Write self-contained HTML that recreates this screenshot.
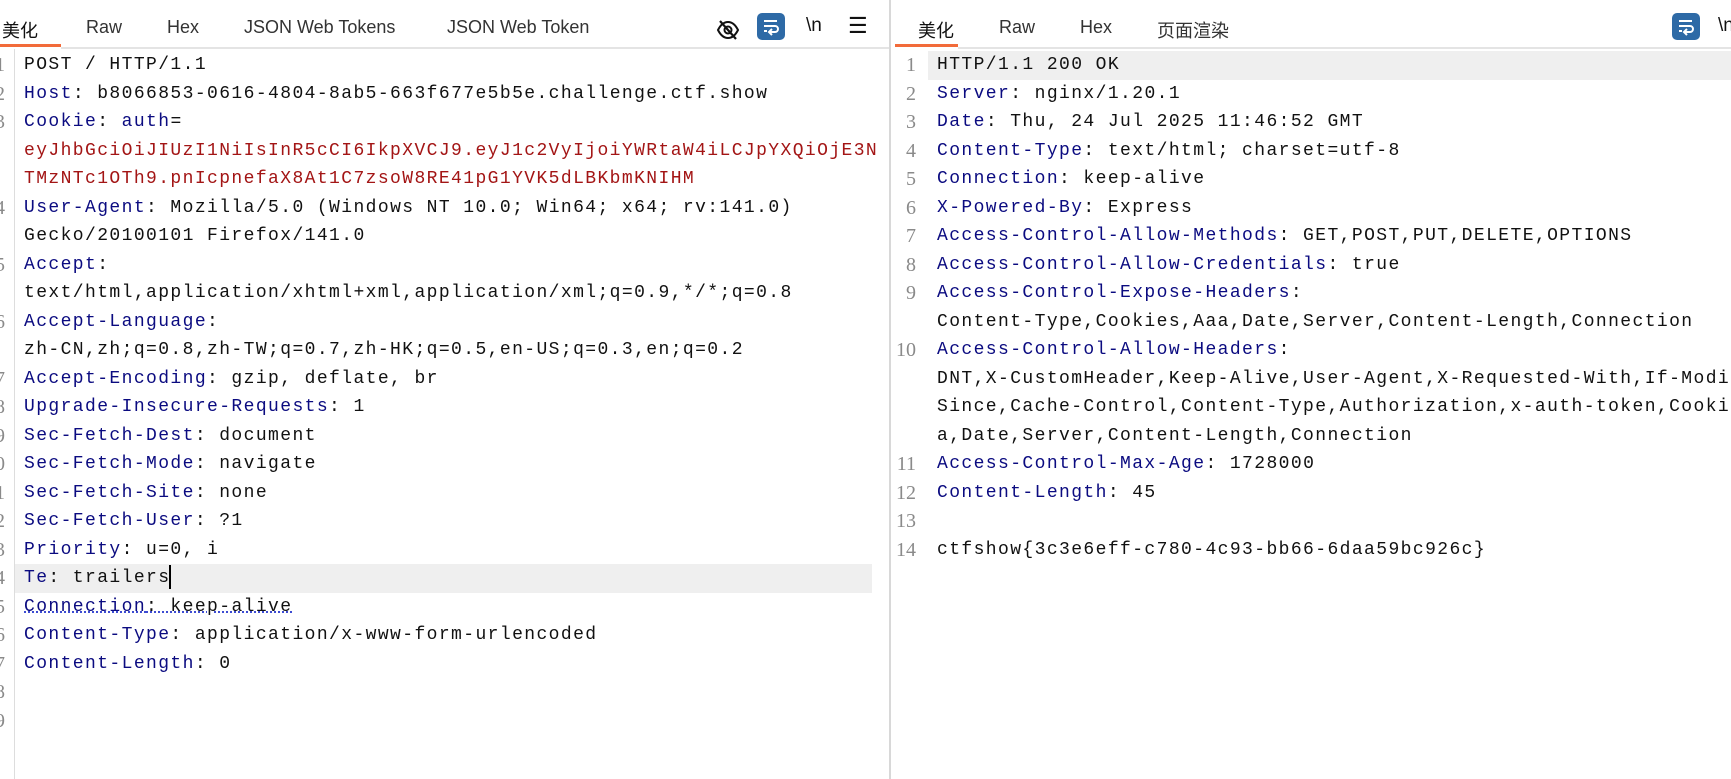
<!DOCTYPE html>
<html><head><meta charset="utf-8"><style>
*{margin:0;padding:0;box-sizing:border-box}
body{width:1731px;height:779px;overflow:hidden;background:#fff;position:relative;font-family:"Liberation Sans","Noto Sans CJK SC",sans-serif}
.tab{position:absolute;top:17px;font-size:18px;color:#333;white-space:nowrap}
.ul{position:absolute;top:44px;height:3px;background:#f26b3a}
.hr{position:absolute;top:47px;height:2px;background:#e4e4e4}
.code{position:absolute;font-family:"Liberation Mono",monospace;font-size:18px;letter-spacing:1.4px;color:#111;white-space:pre}
.r{position:absolute;height:28.5px;line-height:28.5px;white-space:pre}
.k{color:#0b0b80}
.v{color:#a31515}
.n{position:absolute;width:30px;text-align:right;color:#8a8a8a;font-family:"Liberation Serif",serif;font-size:20px;line-height:28.5px}
.hl{position:absolute;height:28.5px;background:#efefef}
</style></head><body>
<!-- left tabs -->
<div class="tab" style="left:2px;color:#111">美化</div>
<div class="tab" style="left:86px">Raw</div>
<div class="tab" style="left:167px">Hex</div>
<div class="tab" style="left:244px">JSON Web Tokens</div>
<div class="tab" style="left:447px">JSON Web Token</div>
<div class="ul" style="left:0;width:61px"></div>
<div class="hr" style="left:61px;width:828px"></div>
<svg style="position:absolute;left:716px;top:19px" width="24" height="22" viewBox="0 0 24 22"><path d="M2 11C5 5 9 3 12 3s7 2 10 8c-3 6-7 8-10 8S5 17 2 11z" fill="none" stroke="#111" stroke-width="2"/><circle cx="12" cy="11" r="3.5" fill="none" stroke="#111" stroke-width="2"/><path d="M4 2L20 20" stroke="#111" stroke-width="2.2"/></svg>
<div style="position:absolute;left:757px;top:13px;width:28px;height:27px;border-radius:5px;background:#2e6aa6"></div>
<svg style="position:absolute;left:760px;top:16px" width="22" height="21" viewBox="0 0 22 21"><path d="M4 5h13M4 10h11a3 3 0 010 6h-5M4 15h3" fill="none" stroke="#fff" stroke-width="2"/><path d="M12 13l-3 3 3 3" fill="none" stroke="#fff" stroke-width="2"/></svg>
<div class="tab" style="left:806px;top:15px;font-size:19px;color:#111">\n</div>
<div class="tab" style="left:848px;top:13px;font-size:22px;color:#111">☰</div>
<!-- divider -->
<div style="position:absolute;left:889px;top:0;width:2px;height:779px;background:#d8d8d8"></div>
<!-- right tabs -->
<div class="tab" style="left:918px;color:#111">美化</div>
<div class="tab" style="left:999px">Raw</div>
<div class="tab" style="left:1080px">Hex</div>
<div class="tab" style="left:1157px">页面渲染</div>
<div class="ul" style="left:895px;width:63px"></div>
<div class="hr" style="left:958px;width:773px"></div>
<div style="position:absolute;left:1672px;top:13px;width:28px;height:27px;border-radius:5px;background:#2e6aa6"></div>
<svg style="position:absolute;left:1675px;top:16px" width="22" height="21" viewBox="0 0 22 21"><path d="M4 5h13M4 10h11a3 3 0 010 6h-5M4 15h3" fill="none" stroke="#fff" stroke-width="2"/><path d="M12 13l-3 3 3 3" fill="none" stroke="#fff" stroke-width="2"/></svg>
<div class="tab" style="left:1718px;top:15px;font-size:19px;color:#111">\n</div>

<!-- left editor -->
<div style="position:absolute;left:14px;top:49px;width:1px;height:730px;background:#ddd"></div>
<div class="hl" style="left:15px;width:857px;top:564px"></div>
<div class="n" style="left:-25px;top:51px">1</div><div class="n" style="left:-25px;top:79.5px">2</div><div class="n" style="left:-25px;top:108px">3</div><div class="n" style="left:-25px;top:193.5px">4</div><div class="n" style="left:-25px;top:250.5px">5</div><div class="n" style="left:-25px;top:307.5px">6</div><div class="n" style="left:-25px;top:364.5px">7</div><div class="n" style="left:-25px;top:393px">8</div><div class="n" style="left:-25px;top:421.5px">9</div><div class="n" style="left:-25px;top:450px">0</div><div class="n" style="left:-25px;top:478.5px">1</div><div class="n" style="left:-25px;top:507px">2</div><div class="n" style="left:-25px;top:535.5px">3</div><div class="n" style="left:-25px;top:564px">4</div><div class="n" style="left:-25px;top:592.5px">5</div><div class="n" style="left:-25px;top:621px">6</div><div class="n" style="left:-25px;top:649.5px">7</div><div class="n" style="left:-25px;top:678px">8</div><div class="n" style="left:-25px;top:706.5px">9</div>
<div class="code" style="left:24px;top:51px">
<div class="r" style="top:0">POST / HTTP/1.1</div>
<div class="r" style="top:28.5px"><span class="k">Host</span>: b8066853-0616-4804-8ab5-663f677e5b5e.challenge.ctf.show</div>
<div class="r" style="top:57px"><span class="k">Cookie</span>: <span class="k">auth</span>=</div>
<div class="r v" style="top:85.5px">eyJhbGciOiJIUzI1NiIsInR5cCI6IkpXVCJ9.eyJ1c2VyIjoiYWRtaW4iLCJpYXQiOjE3N</div>
<div class="r v" style="top:114px">TMzNTc1OTh9.pnIcpnefaX8At1C7zsoW8RE41pG1YVK5dLBKbmKNIHM</div>
<div class="r" style="top:142.5px"><span class="k">User-Agent</span>: Mozilla/5.0 (Windows NT 10.0; Win64; x64; rv:141.0)</div>
<div class="r" style="top:171px">Gecko/20100101 Firefox/141.0</div>
<div class="r" style="top:199.5px"><span class="k">Accept</span>:</div>
<div class="r" style="top:228px">text/html,application/xhtml+xml,application/xml;q=0.9,*/*;q=0.8</div>
<div class="r" style="top:256.5px"><span class="k">Accept-Language</span>:</div>
<div class="r" style="top:285px">zh-CN,zh;q=0.8,zh-TW;q=0.7,zh-HK;q=0.5,en-US;q=0.3,en;q=0.2</div>
<div class="r" style="top:313.5px"><span class="k">Accept-Encoding</span>: gzip, deflate, br</div>
<div class="r" style="top:342px"><span class="k">Upgrade-Insecure-Requests</span>: 1</div>
<div class="r" style="top:370.5px"><span class="k">Sec-Fetch-Dest</span>: document</div>
<div class="r" style="top:399px"><span class="k">Sec-Fetch-Mode</span>: navigate</div>
<div class="r" style="top:427.5px"><span class="k">Sec-Fetch-Site</span>: none</div>
<div class="r" style="top:456px"><span class="k">Sec-Fetch-User</span>: ?1</div>
<div class="r" style="top:484.5px"><span class="k">Priority</span>: u=0, i</div>
<div class="r" style="top:513px"><span class="k">Te</span>: trailers<span style="display:inline-block;width:2px;height:24px;background:#000;vertical-align:middle;margin-left:-1px"></span></div>
<div class="r" style="top:541.5px;text-decoration:underline dotted #2233cc"><span class="k">Connection</span>: keep-alive</div>
<div class="r" style="top:570px"><span class="k">Content-Type</span>: application/x-www-form-urlencoded</div>
<div class="r" style="top:598.5px"><span class="k">Content-Length</span>: 0</div>
</div>

<!-- right editor -->
<div class="hl" style="left:928px;width:803px;top:51px"></div>
<div class="n" style="left:886px;top:51px">1</div><div class="n" style="left:886px;top:79.5px">2</div><div class="n" style="left:886px;top:108px">3</div><div class="n" style="left:886px;top:136.5px">4</div><div class="n" style="left:886px;top:165px">5</div><div class="n" style="left:886px;top:193.5px">6</div><div class="n" style="left:886px;top:222px">7</div><div class="n" style="left:886px;top:250.5px">8</div><div class="n" style="left:886px;top:279px">9</div><div class="n" style="left:886px;top:336px">10</div><div class="n" style="left:886px;top:450px">11</div><div class="n" style="left:886px;top:478.5px">12</div><div class="n" style="left:886px;top:507px">13</div><div class="n" style="left:886px;top:535.5px">14</div>
<div class="code" style="left:937px;top:51px">
<div class="r" style="top:0">HTTP/1.1 200 OK</div>
<div class="r" style="top:28.5px"><span class="k">Server</span>: nginx/1.20.1</div>
<div class="r" style="top:57px"><span class="k">Date</span>: Thu, 24 Jul 2025 11:46:52 GMT</div>
<div class="r" style="top:85.5px"><span class="k">Content-Type</span>: text/html; charset=utf-8</div>
<div class="r" style="top:114px"><span class="k">Connection</span>: keep-alive</div>
<div class="r" style="top:142.5px"><span class="k">X-Powered-By</span>: Express</div>
<div class="r" style="top:171px"><span class="k">Access-Control-Allow-Methods</span>: GET,POST,PUT,DELETE,OPTIONS</div>
<div class="r" style="top:199.5px"><span class="k">Access-Control-Allow-Credentials</span>: true</div>
<div class="r" style="top:228px"><span class="k">Access-Control-Expose-Headers</span>:</div>
<div class="r" style="top:256.5px">Content-Type,Cookies,Aaa,Date,Server,Content-Length,Connection</div>
<div class="r" style="top:285px"><span class="k">Access-Control-Allow-Headers</span>:</div>
<div class="r" style="top:313.5px">DNT,X-CustomHeader,Keep-Alive,User-Agent,X-Requested-With,If-Modified-</div>
<div class="r" style="top:342px">Since,Cache-Control,Content-Type,Authorization,x-auth-token,Cookies,Aa</div>
<div class="r" style="top:370.5px">a,Date,Server,Content-Length,Connection</div>
<div class="r" style="top:399px"><span class="k">Access-Control-Max-Age</span>: 1728000</div>
<div class="r" style="top:427.5px"><span class="k">Content-Length</span>: 45</div>
<div class="r" style="top:484.5px">ctfshow{3c3e6eff-c780-4c93-bb66-6daa59bc926c}</div>
</div>
</body></html>
